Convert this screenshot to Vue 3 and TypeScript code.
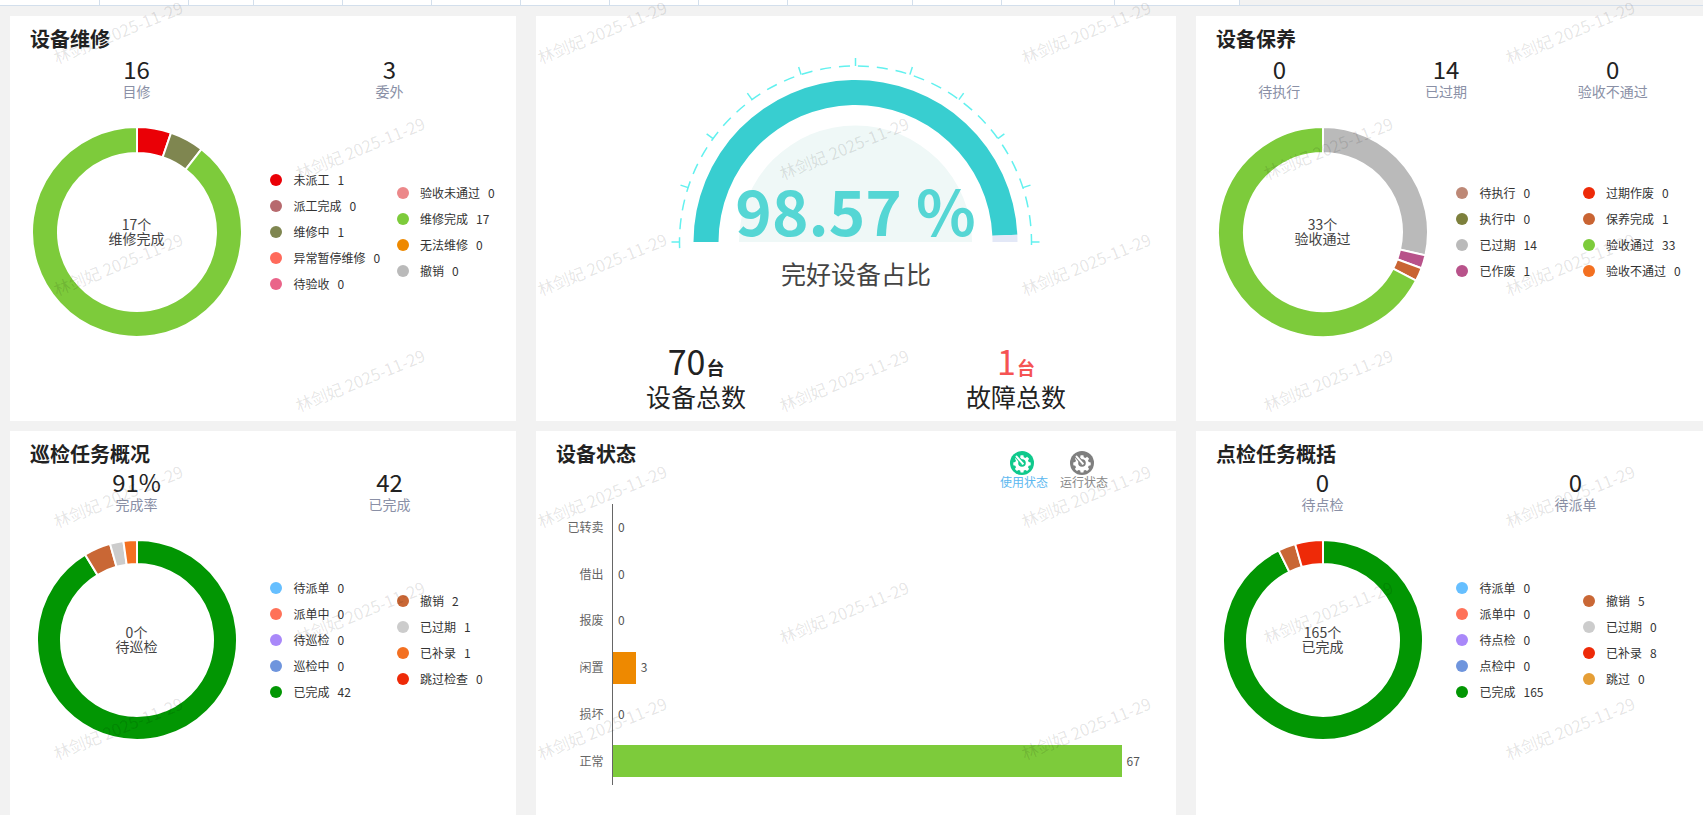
<script setup lang="ts">
type LegendItem = { name: string; value: number; color: string }
type Stat = { value: string; label: string }
type DonutCard = {
  key: string
  title: string
  area: string
  tight: boolean
  stats: Stat[]
  center: string[]
  legend: LegendItem[][]
}

const GREEN = '#7dcb3b'
const DARK_GREEN = '#029603'

const cards: DonutCard[] = [
  {
    key: 'repair',
    title: '设备维修',
    area: 'a',
    tight: false,
    stats: [
      { value: '16', label: '目修' },
      { value: '3', label: '委外' },
    ],
    center: ['17个', '维修完成'],
    legend: [
      [
        { name: '未派工', value: 1, color: '#ea0006' },
        { name: '派工完成', value: 0, color: '#b76a6e' },
        { name: '维修中', value: 1, color: '#7f8650' },
        { name: '异常暂停维修', value: 0, color: '#ff6a5b' },
        { name: '待验收', value: 0, color: '#ea6489' },
      ],
      [
        { name: '验收未通过', value: 0, color: '#ec888a' },
        { name: '维修完成', value: 17, color: GREEN },
        { name: '无法维修', value: 0, color: '#ee8900' },
        { name: '撤销', value: 0, color: '#bababa' },
      ],
    ],
  },
  {
    key: 'upkeep',
    title: '设备保养',
    area: 'c',
    tight: false,
    stats: [
      { value: '0', label: '待执行' },
      { value: '14', label: '已过期' },
      { value: '0', label: '验收不通过' },
    ],
    center: ['33个', '验收通过'],
    legend: [
      [
        { name: '待执行', value: 0, color: '#bd8876' },
        { name: '执行中', value: 0, color: '#7d803c' },
        { name: '已过期', value: 14, color: '#bababa' },
        { name: '已作废', value: 1, color: '#b8528a' },
      ],
      [
        { name: '过期作废', value: 0, color: '#ee2a08' },
        { name: '保养完成', value: 1, color: '#c96433' },
        { name: '验收通过', value: 33, color: GREEN },
        { name: '验收不通过', value: 0, color: '#f37021' },
      ],
    ],
  },
  {
    key: 'patrol',
    title: '巡检任务概况',
    area: 'd',
    tight: true,
    stats: [
      { value: '91%', label: '完成率' },
      { value: '42', label: '已完成' },
    ],
    center: ['0个', '待巡检'],
    legend: [
      [
        { name: '待派单', value: 0, color: '#66bfff' },
        { name: '派单中', value: 0, color: '#ff7259' },
        { name: '待巡检', value: 0, color: '#a988f9' },
        { name: '巡检中', value: 0, color: '#6f95dd' },
        { name: '已完成', value: 42, color: DARK_GREEN },
      ],
      [
        { name: '撤销', value: 2, color: '#c96735' },
        { name: '已过期', value: 1, color: '#cccccc' },
        { name: '已补录', value: 1, color: '#f37021' },
        { name: '跳过检查', value: 0, color: '#ee2a08' },
      ],
    ],
  },
  {
    key: 'spot',
    title: '点检任务概括',
    area: 'f',
    tight: true,
    stats: [
      { value: '0', label: '待点检' },
      { value: '0', label: '待派单' },
    ],
    center: ['165个', '已完成'],
    legend: [
      [
        { name: '待派单', value: 0, color: '#66bfff' },
        { name: '派单中', value: 0, color: '#ff7259' },
        { name: '待点检', value: 0, color: '#a988f9' },
        { name: '点检中', value: 0, color: '#6f95dd' },
        { name: '已完成', value: 165, color: DARK_GREEN },
      ],
      [
        { name: '撤销', value: 5, color: '#c96735' },
        { name: '已过期', value: 0, color: '#cccccc' },
        { name: '已补录', value: 8, color: '#ee2a08' },
        { name: '跳过', value: 0, color: '#e59e36' },
      ],
    ],
  },
]

// 0 degrees is the top, angles grow clockwise
function point(cx: number, cy: number, r: number, deg: number) {
  const rad = (deg * Math.PI) / 180
  return `${(cx + r * Math.sin(rad)).toFixed(2)} ${(cy - r * Math.cos(rad)).toFixed(2)}`
}

function sector(cx: number, cy: number, outer: number, inner: number, from: number, to: number) {
  const large = to - from > 180 ? 1 : 0
  return [
    `M${point(cx, cy, outer, from)}`,
    `A${outer} ${outer} 0 ${large} 1 ${point(cx, cy, outer, to)}`,
    `L${point(cx, cy, inner, to)}`,
    `A${inner} ${inner} 0 ${large} 0 ${point(cx, cy, inner, from)}Z`,
  ].join(' ')
}

// slices keep the order of the legend, empty ones are skipped
function slices(card: DonutCard) {
  const items = card.legend.flat().filter((i) => i.value > 0)
  const total = items.reduce((sum, i) => sum + i.value, 0)
  const outer = card.tight ? 100 : 105
  const inner = card.tight ? 76 : 79
  let angle = 0
  return items.map((i) => {
    const from = angle
    angle += (i.value / total) * 360
    return { color: i.color, d: sector(outer, outer, outer, inner, from, angle) }
  })
}

const ticks = Array.from({ length: 11 }, (_, i) => {
  const deg = -90 + i * 18
  const rad = (deg * Math.PI) / 180
  return {
    x1: 319.5 + 176 * Math.sin(rad),
    y1: 226 - 176 * Math.cos(rad),
    x2: 319.5 + 184 * Math.sin(rad),
    y2: 226 - 184 * Math.cos(rad),
  }
})

const gaugeDone = sector(319.5, 226, 162, 137, -90, 87.4)
const gaugeRest = sector(319.5, 226, 162, 137, 87.4, 90)
const gaugeInner = 'M203 226A116.5 116.5 0 0 1 436 226Z'
const gaugeDash = `M${point(319.5, 226, 176, -92)} A176 176 0 1 1 ${point(319.5, 226, 176, 92)}`

const bars = [
  { name: '已转卖', value: 0, color: GREEN },
  { name: '借出', value: 0, color: GREEN },
  { name: '报废', value: 0, color: GREEN },
  { name: '闲置', value: 3, color: '#ee8900' },
  { name: '损坏', value: 0, color: GREEN },
  { name: '正常', value: 67, color: GREEN },
]

const topCells = [100, 89, 65, 89, 89, 89, 89, 89, 89, 125, 89, 113, 125]

const marks: { x: number; y: number }[] = []
for (let col = 0; col < 7; col++) {
  for (let row = 0; row < 4; row++) {
    marks.push({ x: 118 + col * 242, y: (col % 2 ? 148 : 32) + row * 232 })
  }
}
</script>

<template>
  <div class="page">
    <div class="top-strip">
      <div v-for="(w, i) in topCells" :key="i" class="top-cell" :style="{ width: w + 'px' }"></div>
    </div>

    <div class="grid">
      <section v-for="card in cards" :key="card.key" class="card" :class="{ tight: card.tight }" :style="{ gridArea: card.area }">
        <h2 class="title">{{ card.title }}</h2>
        <div class="stats" :class="{ three: card.stats.length === 3 }">
          <div v-for="s in card.stats" :key="s.label" class="stat">
            <div class="stat-value">{{ s.value }}</div>
            <div class="stat-label">{{ s.label }}</div>
          </div>
        </div>
        <div class="chart-row">
          <div class="donut-box">
            <div class="donut">
              <svg :width="card.tight ? 200 : 210" :height="card.tight ? 200 : 210">
                <path v-for="(s, i) in slices(card)" :key="i" :d="s.d" :fill="s.color" stroke="#fff" stroke-width="2" />
              </svg>
              <div class="donut-center">
                <span v-for="line in card.center" :key="line">{{ line }}</span>
              </div>
            </div>
          </div>
          <div class="legend">
            <ul v-for="(col, i) in card.legend" :key="i" class="legend-col">
              <li v-for="item in col" :key="item.name" class="legend-item">
                <i class="dot" :style="{ background: item.color }"></i>
                <span class="legend-name">{{ item.name }}</span>
                <span class="legend-value">{{ item.value }}</span>
              </li>
            </ul>
          </div>
        </div>
      </section>

      <section class="card gauge-card" style="grid-area: b">
        <svg class="gauge" width="640" height="240">
          <path :d="gaugeInner" fill="#eff8f7" />
          <path :d="gaugeDash" fill="none" stroke="#62f1ef" stroke-width="1.5" stroke-dasharray="11 8" />
          <line
            v-for="(t, i) in ticks"
            :key="i"
            :x1="t.x1"
            :y1="t.y1"
            :x2="t.x2"
            :y2="t.y2"
            stroke="#62f1ef"
            stroke-width="1.5"
          />
          <path :d="gaugeDone" fill="#38ced0" />
          <path :d="gaugeRest" fill="#e3e8f7" />
          <text class="gauge-text" x="319.5" y="219.5" text-anchor="middle">98.57 %</text>
        </svg>
        <div class="gauge-caption">完好设备占比</div>
        <div class="totals">
          <div class="total">
            <div class="total-num">70<small>台</small></div>
            <div class="total-label">设备总数</div>
          </div>
          <div class="total">
            <div class="total-num danger">1<small>台</small></div>
            <div class="total-label">故障总数</div>
          </div>
        </div>
      </section>

      <section class="card status-card" style="grid-area: e">
        <h2 class="title">设备状态</h2>
        <div class="tabs">
          <div class="tab active">
            <svg width="24" height="24" viewBox="0 0 24 24">
              <circle cx="12" cy="12" r="12" fill="#0fc98c" />
              <path
                d="M10.6 4.2h2.8l.4 2 1.6.7 1.7-1.1 2 2-1.1 1.7.7 1.6 2 .4v2.8l-2 .4-.7 1.6 1.1 1.7-2 2-1.7-1.1-1.6.7-.4 2h-2.8l-.4-2-1.6-.7-1.7 1.1-2-2 1.1-1.7-.7-1.6-2-.4v-2.8l2-.4.7-1.6-1.1-1.7 2-2 1.7 1.1 1.6-.7z"
                fill="#fff"
              />
              <circle cx="12" cy="12" r="3.8" fill="#0fc98c" />
              <circle cx="12" cy="12" r="1.7" fill="#fff" />
              <path d="M6.4 5.2l6.4 7.4" stroke="#0fc98c" stroke-width="4" />
              <path d="M6.6 5.6l6.2 7" stroke="#fff" stroke-width="2" stroke-linecap="round" />
            </svg>
            <span>使用状态</span>
          </div>
          <div class="tab">
            <svg width="24" height="24" viewBox="0 0 24 24">
              <circle cx="12" cy="12" r="12" fill="#7f7f7f" />
              <path
                d="M10.6 4.2h2.8l.4 2 1.6.7 1.7-1.1 2 2-1.1 1.7.7 1.6 2 .4v2.8l-2 .4-.7 1.6 1.1 1.7-2 2-1.7-1.1-1.6.7-.4 2h-2.8l-.4-2-1.6-.7-1.7 1.1-2-2 1.1-1.7-.7-1.6-2-.4v-2.8l2-.4.7-1.6-1.1-1.7 2-2 1.7 1.1 1.6-.7z"
                fill="#fff"
              />
              <circle cx="12" cy="12" r="3.8" fill="#7f7f7f" />
              <circle cx="12" cy="12" r="1.7" fill="#fff" />
              <path d="M6.4 5.2l6.4 7.4" stroke="#7f7f7f" stroke-width="4" />
              <path d="M6.6 5.6l6.2 7" stroke="#fff" stroke-width="2" stroke-linecap="round" />
            </svg>
            <span>运行状态</span>
          </div>
        </div>
        <div class="bars">
          <div v-for="b in bars" :key="b.name" class="bar-row">
            <div class="bar-name">{{ b.name }}</div>
            <div class="bar-track">
              <div class="bar" :style="{ width: b.value * 7.59 + 'px', background: b.color }"></div>
              <span class="bar-value">{{ b.value }}</span>
            </div>
          </div>
        </div>
      </section>
    </div>

    <div class="marks">
      <span
        v-for="(m, i) in marks"
        :key="i"
        class="mark"
        :style="{ left: m.x + 'px', top: m.y + 'px' }"
      >林剑妃 2025-11-29</span>
    </div>
  </div>
</template>

<style scoped>
.page {
  position: relative;
  height: 815px;
  overflow: hidden;
  background: #f2f2f2;
  font-family: "Noto Sans CJK SC", sans-serif;
  color: #333;
}

.top-strip {
  display: flex;
  height: 5px;
  border-bottom: 1px solid #d3dfec;
}
.top-cell {
  box-sizing: border-box;
  background: #fff;
  border-right: 1px solid #d3dfec;
}

.grid {
  display: grid;
  grid-template-columns: 506px 640px 1fr;
  grid-template-rows: 405px 1fr;
  grid-template-areas:
    "a b c"
    "d e f";
  column-gap: 20px;
  row-gap: 10px;
  height: 809px;
  padding: 10px 0 0 10px;
  box-sizing: border-box;
}

.card {
  position: relative;
  background: #fff;
  overflow: hidden;
}

.title {
  margin: 0;
  padding: 8px 0 0 20px;
  font-size: 20px;
  line-height: 30px;
  font-weight: 700;
  color: #222;
}

.stats {
  display: flex;
  width: 506px;
}
.stats.three {
  width: 500px;
}
.stat {
  flex: 1;
  text-align: center;
}
.stat-value {
  font-size: 24px;
  line-height: 26px;
  margin-top: 2px;
  color: #222;
}
.stat-label {
  font-size: 14px;
  line-height: 18px;
  color: #8a90a6;
}
.tight .stat-value {
  margin-top: 0;
}

.chart-row {
  display: flex;
  align-items: center;
  margin-top: 27px;
}
.donut-box {
  display: flex;
  justify-content: center;
  width: 253px;
  flex: none;
}
.donut {
  position: relative;
  display: flex;
}
.donut-center {
  position: absolute;
  inset: 0;
  display: flex;
  flex-direction: column;
  align-items: center;
  justify-content: center;
  padding-bottom: 2px;
  box-sizing: border-box;
  font-size: 14px;
  line-height: 14px;
  color: #444;
}

.legend {
  display: flex;
  align-items: center;
  padding-left: 7px;
}
.legend-col {
  list-style: none;
  margin: 0;
  padding: 0;
  width: 126.5px;
}
.legend-item {
  display: flex;
  align-items: center;
  height: 26px;
  font-size: 12px;
  color: #333;
  white-space: nowrap;
}
.dot {
  width: 12px;
  height: 12px;
  border-radius: 50%;
  margin-right: 11.5px;
  flex: none;
}
.legend-name,
.legend-value {
  padding-bottom: 2px;
}
.legend-value {
  margin-left: 8px;
}

.gauge-card {
  display: flex;
  flex-direction: column;
}
.gauge {
  display: block;
  flex: none;
}
.gauge-text {
  font-size: 62px;
  font-weight: 700;
  fill: #55d6d4;
}
.gauge-caption {
  margin-top: 2px;
  height: 30px;
  line-height: 30px;
  font-size: 25px;
  text-align: center;
  color: #444;
}
.totals {
  display: flex;
  margin-top: 59px;
}
.total {
  flex: 1;
  text-align: center;
  color: #222;
}
.total-num {
  font-size: 34px;
  line-height: 28px;
}
.total-num small {
  font-size: 18px;
  font-weight: 700;
  margin-left: 1px;
}
.total-num.danger {
  color: #f55353;
}
.total-label {
  font-size: 25px;
  line-height: 30px;
}

.status-card .tabs {
  position: absolute;
  top: 20px;
  left: 464px;
  display: flex;
  gap: 12px;
}
.tab {
  display: flex;
  flex-direction: column;
  width: 48px;
  font-size: 12px;
  line-height: 14px;
  color: #888;
}
.tab svg {
  display: block;
  margin: 0 0 0 10px;
}
.tab.active {
  color: #5cb8f0;
}

.bars {
  margin-top: 35px;
}
.bar-row {
  display: flex;
  height: 46.8px;
  align-items: center;
}
.bar-name {
  width: 67.5px;
  padding-right: 8.5px;
  padding-bottom: 2px;
  text-align: right;
  font-size: 12px;
  color: #666;
  flex: none;
}
.bar-track {
  display: flex;
  align-items: center;
  height: 100%;
  border-left: 1px solid #666;
  font-size: 12px;
  color: #555;
}
.bar {
  height: 32px;
}
.bar-value {
  margin-left: 5px;
  padding-bottom: 2px;
}

.marks {
  position: absolute;
  inset: 0;
  pointer-events: none;
}
.mark {
  position: absolute;
  transform: translate(-50%, -50%) rotate(-22deg);
  font-size: 16.5px;
  line-height: 20px;
  color: rgba(0, 0, 0, 0.11);
  white-space: nowrap;
}
</style>
